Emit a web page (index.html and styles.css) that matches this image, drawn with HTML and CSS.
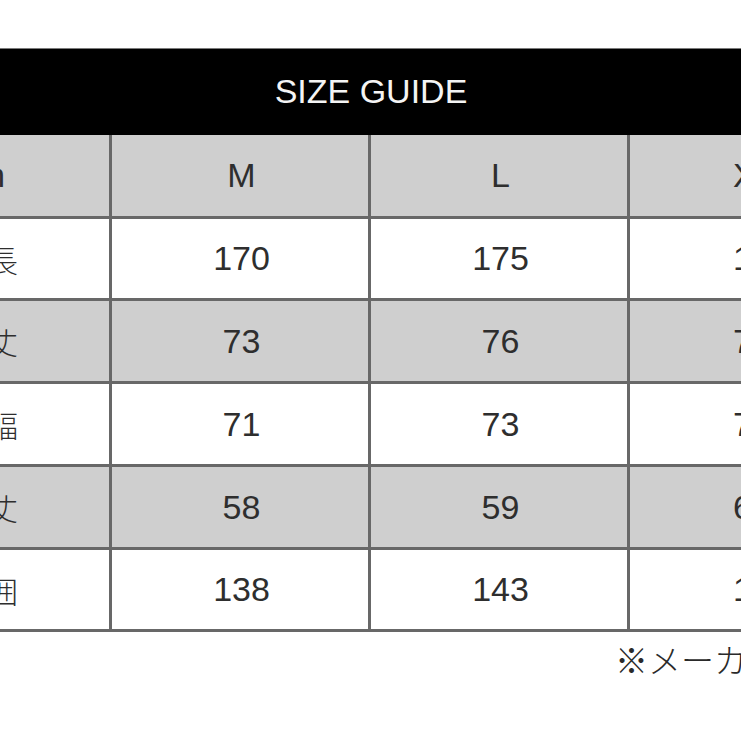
FILE: index.html
```html
<!DOCTYPE html>
<html lang="ja">
<head>
<meta charset="utf-8">
<title>SIZE GUIDE</title>
<link rel="stylesheet" href="styles.css">
</head>
<body>
<div class="page">
  <div class="title">SIZE GUIDE</div>
  <div class="table">
    <div class="row head gray">
      <div class="cell label">cm</div>
      <div class="cell">M</div>
      <div class="cell">L</div>
      <div class="cell xl">XL</div>
    </div>
    <div class="row r82">
      <div class="cell label jp">身長</div>
      <div class="cell">170</div>
      <div class="cell">175</div>
      <div class="cell xl">180</div>
    </div>
    <div class="row gray">
      <div class="cell label jp">着丈</div>
      <div class="cell">73</div>
      <div class="cell">76</div>
      <div class="cell xl">79</div>
    </div>
    <div class="row">
      <div class="cell label jp">身幅</div>
      <div class="cell">71</div>
      <div class="cell">73</div>
      <div class="cell xl">75</div>
    </div>
    <div class="row gray">
      <div class="cell label jp">袖丈</div>
      <div class="cell">58</div>
      <div class="cell">59</div>
      <div class="cell xl">60</div>
    </div>
    <div class="row r82">
      <div class="cell label jp">胸囲</div>
      <div class="cell">138</div>
      <div class="cell">143</div>
      <div class="cell xl">148</div>
    </div>
  </div>
  <div class="note">※メーカー表記サイズ</div>
</div>
</body>
</html>
```

FILE: styles.css
```css
html, body {
  margin: 0;
  padding: 0;
  background: #ffffff;
  overflow: hidden;
}
body {
  width: 741px;
  height: 741px;
}
.page {
  margin-left: -147px;
  width: 1036px;
  padding-top: 48px;
  font-family: "Liberation Sans", Arial, "Noto Sans CJK JP", sans-serif;
  color: #2e2e2e;
}
.title {
  height: 87px;
  box-sizing: border-box;
  border-top: 1px solid #7a7a7a;
  background: #000000;
  color: #f4f4f4;
  font-size: 34px;
  display: flex;
  align-items: center;
  justify-content: center;
  padding-bottom: 2px;
}
.table {
  display: flex;
  flex-direction: column;
}
.row {
  display: grid;
  grid-template-columns: repeat(4, 259px);
  height: 83px;
  box-sizing: border-box;
  border-bottom: 3px solid #686868;
  background: #ffffff;
}
.row.head {
  height: 84px;
}
.row.r82 {
  height: 82px;
}
.row.gray {
  background: #cfcfcf;
}
.cell {
  box-sizing: border-box;
  border-right: 3px solid #686868;
  display: flex;
  align-items: center;
  justify-content: center;
  font-size: 34px;
  padding-left: 3px;
}
.cell.xl {
  justify-content: flex-start;
  padding-left: 103px;
}
.cell.jp {
  font-family: "Noto Sans CJK JP", sans-serif;
  font-size: 30px;
  font-weight: 300;
  padding-left: 14px;
}
.note {
  margin-top: 9px;
  padding-left: 762px;
  font-family: "Noto Sans CJK JP", sans-serif;
  font-size: 33px;
  font-weight: 300;
  line-height: 36px;
  white-space: nowrap;
  color: #2a2a2a;
}
```
